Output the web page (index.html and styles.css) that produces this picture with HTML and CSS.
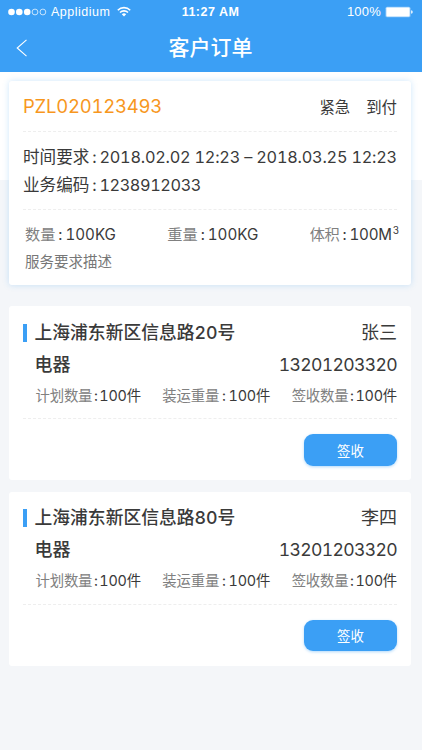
FILE: index.html
```
<!DOCTYPE html>
<html lang="zh-CN">
<head>
  <meta charset="utf-8">
  <meta name="viewport" content="width=device-width, initial-scale=1">
  <title>客户订单</title>
  <link rel="stylesheet" href="styles.css">
</head>
<body>
  <header class="header">
    <div class="status-bar">
      <div class="carrier">
        <svg width="39" height="8" viewBox="0 0 39 8">
          <g fill="#fff">
            <circle cx="3.5" cy="4" r="3.3"/>
            <circle cx="11.3" cy="4" r="3.3"/>
            <circle cx="19.2" cy="4" r="3.3"/>
          </g>
          <g fill="none" stroke="#fff" stroke-width="0.7">
            <circle cx="27" cy="4" r="2.9"/>
            <circle cx="34.9" cy="4" r="2.9"/>
          </g>
        </svg>
        <span class="carrier-name">Applidium</span>
        <svg width="14" height="11" viewBox="0 0 14 11">
          <g fill="none" stroke="#fff" stroke-width="1.6">
            <path d="M0.8 4.2a8.8 8.8 0 0 1 12.4 0"/>
            <path d="M3 6.5a5.7 5.7 0 0 1 8 0"/>
          </g>
          <path d="M7 10.6L4.8 8.3a3.1 3.1 0 0 1 4.4 0z" fill="#fff"/>
        </svg>
      </div>
      <span class="clock">11:27 AM</span>
      <div class="battery">
        <span class="battery-text">100%</span>
        <svg width="28" height="12" viewBox="0 0 28 12">
          <rect x="0.5" y="0.7" width="25" height="10.6" rx="1.6" fill="#fff" fill-opacity="0.45"/>
          <rect x="1.4" y="1.6" width="23.2" height="8.8" rx="0.8" fill="#fff"/>
          <path d="M26.2 4.2q1.5 0.3 1.5 1.8t-1.5 1.8z" fill="#fff"/>
        </svg>
      </div>
    </div>
    <div class="nav">
      <svg class="back" width="12" height="18" viewBox="0 0 12 18">
        <path d="M10.5 0.8L1.2 9l9.3 8.2" fill="none" stroke="#fff" stroke-width="1.1"/>
      </svg>
      <h1 class="nav-title">客户订单</h1>
    </div>
  </header>

  <main class="content">
    <section class="card summary">
      <div class="summary-top">
        <span class="order-no">PZL020123493</span>
        <div class="tags"><span>紧急</span><span>到付</span></div>
      </div>
      <div class="summary-info">
        <div class="info-line"><span class="info-label">时间要求</span><i class="colon">:</i><span class="date">2018.02.02 12:23 – 2018.03.25 12:23</span></div>
        <div class="info-line"><span class="info-label">业务编码</span><i class="colon">:</i><span class="code">1238912033</span></div>
      </div>
      <div class="summary-bottom">
        <div class="measures">
          <div><span class="muted">数量</span><i class="colon">:</i>100KG</div>
          <div><span class="muted">重量</span><i class="colon">:</i>100KG</div>
          <div class="volume"><span class="muted">体积</span><i class="colon">:</i>100M<sup>3</sup></div>
        </div>
        <p class="desc">服务要求描述</p>
      </div>
    </section>

    <section class="card order">
      <div class="order-body">
        <div class="order-row">
          <h2 class="address">上海浦东新区信息路20号</h2>
          <span class="person">张三</span>
        </div>
        <div class="order-row">
          <span class="goods">电器</span>
          <span class="phone">13201203320</span>
        </div>
        <div class="counts">
          <div><span class="muted">计划数量</span><i class="colon">:</i>100件</div>
          <div><span class="muted">装运重量</span><i class="colon wide">:</i>100件</div>
          <div><span class="muted">签收数量</span><i class="colon">:</i>100件</div>
        </div>
      </div>
      <div class="order-foot"><button class="sign-btn">签收</button></div>
    </section>

    <section class="card order">
      <div class="order-body">
        <div class="order-row">
          <h2 class="address">上海浦东新区信息路80号</h2>
          <span class="person">李四</span>
        </div>
        <div class="order-row">
          <span class="goods">电器</span>
          <span class="phone">13201203320</span>
        </div>
        <div class="counts">
          <div><span class="muted">计划数量</span><i class="colon">:</i>100件</div>
          <div><span class="muted">装运重量</span><i class="colon wide">:</i>100件</div>
          <div><span class="muted">签收数量</span><i class="colon">:</i>100件</div>
        </div>
      </div>
      <div class="order-foot"><button class="sign-btn">签收</button></div>
    </section>
  </main>
</body>
</html>
```
FILE: styles.css
```
* {
  box-sizing: border-box;
}

body {
  margin: 0;
  min-height: 750px;
  background: #f4f6f9;
  color: #3a3a3a;
  font-family: Inter, "Noto Sans CJK SC", sans-serif;
  font-variant-numeric: tabular-nums;
  white-space: nowrap;
}

svg {
  display: block;
}

/* header */
.header {
  height: 72px;
  background: #3b9ff5;
  color: #fff;
}

.status-bar {
  display: grid;
  grid-template-columns: 1fr auto 1fr;
  align-items: center;
  height: 23px;
  padding: 0 9px 0 8px;
  font-family: "Liberation Sans", Arial, sans-serif;
  font-size: 12px;
}

.carrier,
.battery {
  display: flex;
  align-items: center;
}

.carrier-name {
  margin: 0 7px 0 4px;
  font-size: 12.5px;
  letter-spacing: 0.5px;
}

.clock {
  font-weight: bold;
  font-size: 12.5px;
  letter-spacing: 0.5px;
}

.battery {
  justify-content: flex-end;
  gap: 4px;
}

.battery-text {
  font-size: 13px;
  letter-spacing: 0.2px;
}

.nav {
  display: grid;
  grid-template-columns: 1fr auto 1fr;
  align-items: center;
  height: 49px;
  padding: 0 17px 0 16px;
}

.nav-title {
  margin: 0;
  font-size: 21px;
  font-weight: 500;
  line-height: 49px;
}

/* cards */
.content {
  padding: 9px 11px 0 9px;
  background: linear-gradient(#fff, #fff) no-repeat 0 0 / 100% 108px;
}

.card {
  padding: 0 14px;
  border-radius: 3px;
  background: #fff;
}

.colon {
  display: inline-block;
  flex-shrink: 0;
  width: 10px;
  text-align: center;
  font-style: normal;
}

.muted {
  color: #808080;
}

/* summary */
.summary {
  height: 204px;
  margin-bottom: 21px;
  box-shadow: 0 0 6px rgba(59, 159, 245, 0.25);
}

.summary-top {
  display: flex;
  justify-content: space-between;
  align-items: center;
  height: 51px;
  border-bottom: 1px dashed #eee;
}

.order-no {
  padding-bottom: 1px;
  color: #f7971e;
  font-size: 18.5px;
  letter-spacing: -0.25px;
}

.tags {
  display: flex;
  gap: 16px;
  font-size: 15.4px;
}

.summary-info {
  height: 78px;
  padding-top: 11px;
  border-bottom: 1px dashed #eee;
}

.info-line {
  display: flex;
  height: 28px;
  line-height: 28px;
  font-size: 16.3px;
}

.info-label {
  font-size: 16.6px;
}

.date {
  letter-spacing: -0.22px;
}

.code {
  letter-spacing: -0.4px;
}

.summary-bottom {
  padding: 12px 0 0 2px;
}

.measures {
  display: flex;
  justify-content: space-between;
  height: 27px;
  line-height: 26px;
  font-size: 15.2px;
}

.measures sup {
  margin-left: 1px;
  font-size: 10px;
  line-height: 0;
}

.volume {
  margin-right: -2px;
  letter-spacing: -0.25px;
}

.desc {
  margin: 0;
  color: #777;
  font-size: 14.5px;
  line-height: 26px;
}

/* orders */
.order {
  height: 174px;
  margin-bottom: 11.5px;
}

.order-body {
  height: 113px;
  padding-top: 10.5px;
  border-bottom: 1px dashed #eee;
}

.order-row {
  display: flex;
  justify-content: space-between;
  height: 32px;
  line-height: 32px;
  font-size: 18px;
}

.address {
  display: flex;
  align-items: center;
  margin: 0;
  font-size: 17.8px;
  font-weight: 500;
}

.address::before {
  content: "";
  width: 4px;
  height: 18px;
  margin-right: 7.5px;
  background: #3b9ff5;
}

.goods {
  padding-left: 11.5px;
  font-weight: 500;
}

.phone {
  font-size: 17.6px;
  letter-spacing: -0.65px;
}

.counts {
  display: flex;
  justify-content: space-between;
  height: 30px;
  padding-left: 12.5px;
  line-height: 29px;
  font-size: 14.4px;
  letter-spacing: -0.2px;
}

.counts .colon {
  width: 7px;
}

.counts .wide {
  width: 9.5px;
}

.order-foot {
  display: flex;
  justify-content: flex-end;
  padding-top: 15px;
}

.sign-btn {
  width: 93px;
  height: 31.5px;
  padding: 0;
  border: 0;
  border-radius: 9px;
  background: #3b9ff5;
  box-shadow: 0 1px 3px rgba(59, 159, 245, 0.4);
  color: #fff;
  font-family: inherit;
  font-size: 13.4px;
}
```
